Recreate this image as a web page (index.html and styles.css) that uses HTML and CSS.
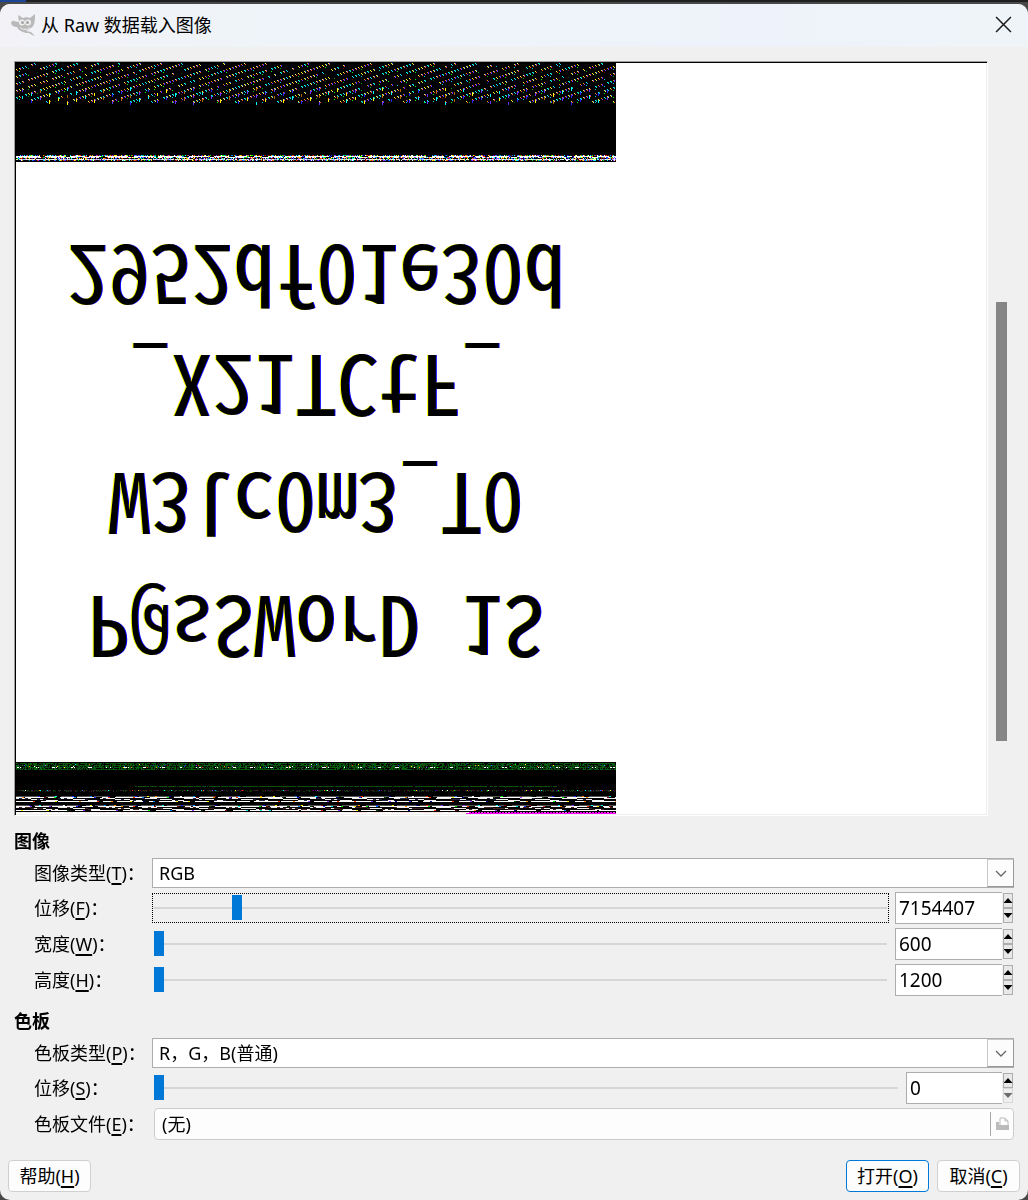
FILE: index.html
```html
<!DOCTYPE html>
<html lang="zh-CN">
<head>
<meta charset="utf-8">
<title>从 Raw 数据载入图像</title>
<link rel="stylesheet" href="styles.css">
</head>
<body>
<main class="dialog">
  <header class="titlebar">
    <svg class="logo" viewBox="0 0 24 22" aria-hidden="true">
      <path d="M1 7C3 6 5 8 8 8L7 1L12 4C14 3 17 3 19 4L24 0C24 6 24 12 20 14L15 17L20 18L24 22L21 21L18 19C13 19 8 17 6 13C3 13 0 11 0 9Z" fill="#b9b9b9"/>
      <circle cx="11" cy="8.500" r="3" fill="#eee"/><circle cx="17" cy="8.500" r="3" fill="#eee"/>
      <circle cx="11.500" cy="8.500" r="1.500" fill="#a5a5a5"/><circle cx="16.500" cy="8.500" r="1.500" fill="#a5a5a5"/>
      <path d="M9 13.500C12 16 16 16 19 13.500" fill="none" stroke="#eee"/>
    </svg>
    <h1 class="title">从 Raw 数据载入图像</h1>
    <button class="close" type="button" aria-label="关闭">
      <svg viewBox="0 0 16 16"><path d="M1 1L15 15M15 1L1 15" fill="none" stroke="#1a1a1a" stroke-width="1.400"/></svg>
    </button>
  </header>

  <section class="preview" aria-label="预览">
    <div class="viewport">
      <div class="artwork">
        <canvas class="strip" id="strip-top" width="600" height="99"></canvas>
        <div class="message">
          <p>P@sSWorD 1S</p>
          <p>W3lc0m3_T0</p>
          <p>_X21TCtF_</p>
          <p>2952df01e30d</p>
        </div>
        <canvas class="strip" id="strip-bottom" width="600" height="52"></canvas>
      </div>
    </div>
    <div class="scrollbar"><div class="scroll-thumb"></div></div>
  </section>

  <form class="form">
    <h2 class="heading">图像</h2>
    <div class="fields">
      <label for="type">图像类型(<u>T</u>)：</label>
      <div class="combo">
        <select id="type"><option>RGB</option></select>
        <span class="combo-arrow"><svg viewBox="0 0 12 7"><path d="M1 1L6 6L11 1" fill="none" stroke="#666" stroke-width="1.300"/></svg></span>
      </div>

      <label for="offset">位移(<u>F</u>)：</label>
      <div class="scale">
        <input class="range focused" type="range" aria-label="位移" min="0" max="66200000" value="7154407">
        <div class="spin spin-wide">
          <input type="text" id="offset" value="7154407">
          <div class="steps"><button type="button" aria-label="增加"><i class="up"></i></button><button type="button" aria-label="减少"><i class="down"></i></button></div>
        </div>
      </div>

      <label for="width">宽度(<u>W</u>)：</label>
      <div class="scale">
        <input class="range" type="range" aria-label="宽度" min="1" max="6000000" value="600">
        <div class="spin spin-wide">
          <input type="text" id="width" value="600">
          <div class="steps"><button type="button" aria-label="增加"><i class="up"></i></button><button type="button" aria-label="减少"><i class="down"></i></button></div>
        </div>
      </div>

      <label for="height">高度(<u>H</u>)：</label>
      <div class="scale">
        <input class="range" type="range" aria-label="高度" min="1" max="6000000" value="1200">
        <div class="spin spin-wide">
          <input type="text" id="height" value="1200">
          <div class="steps"><button type="button" aria-label="增加"><i class="up"></i></button><button type="button" aria-label="减少"><i class="down"></i></button></div>
        </div>
      </div>
    </div>

    <h2 class="heading">色板</h2>
    <div class="fields">
      <label for="palette">色板类型(<u>P</u>)：</label>
      <div class="combo">
        <select id="palette"><option>R，G，B(普通)</option></select>
        <span class="combo-arrow"><svg viewBox="0 0 12 7"><path d="M1 1L6 6L11 1" fill="none" stroke="#666" stroke-width="1.300"/></svg></span>
      </div>

      <label for="palette-offset">位移(<u>S</u>)：</label>
      <div class="scale">
        <input class="range" type="range" aria-label="位移" min="0" max="66200000" value="0">
        <div class="spin">
          <input type="text" id="palette-offset" value="0">
          <div class="steps"><button type="button" aria-label="增加"><i class="up"></i></button><button type="button" aria-label="减少" disabled><i class="down"></i></button></div>
        </div>
      </div>

      <label for="file">色板文件(<u>E</u>)：</label>
      <button class="file" id="file" type="button">
        <span class="file-name">(无)</span>
        <svg class="file-icon" viewBox="0 0 14 14"><path d="M4 8V1H9L12 4V8" fill="#fff" stroke="#bbb"/><path d="M9 1V4H12" fill="none" stroke="#bbb"/><path d="M0 5H3V8H13V13H0Z" fill="#bbb"/></svg>
      </button>
    </div>

    <footer class="actions">
      <button class="btn help" type="button">帮助(<u>H</u>)</button>
      <button class="btn primary" type="button">打开(<u>O</u>)</button>
      <button class="btn" type="button">取消(<u>C</u>)</button>
    </footer>
  </form>
</main>
<script src="strips.js"></script>
</body>
</html>
```
FILE: styles.css
```css
* { box-sizing: border-box; }

body {
  margin: 0;
  padding-top: 4px;
  background: linear-gradient(90deg, #1b4594 26px, #1f1f1f 26px) 0 0 / 100% 2px no-repeat, #484848;
  color: #000;
  font: 18px/24px "Noto Sans", "Noto Sans CJK SC", sans-serif;
}

button, input, select { font: inherit; color: inherit; }
button { cursor: default; }

u {
  text-decoration-thickness: 2px;
  text-underline-offset: 3px;
}

.dialog {
  background: #f0f0f0;
  border-radius: 10px;
  overflow: hidden;
}

.titlebar {
  display: flex;
  align-items: center;
  height: 43px;
  padding: 0 16px 2px 11px;
  background: linear-gradient(90deg, #f2f2f7, #eef4f9 30%, #eef3fb 75%, #eff4f8);
}

.logo { width: 24px; height: 22px; }

.title {
  flex: 1;
  margin: 0 0 0 6px;
  font-size: 18px;
  font-weight: 400;
}

.close {
  display: flex;
  padding: 0;
  border: 0;
  background: none;
}
.close svg { width: 17px; height: 17px; }

.preview {
  display: flex;
  gap: 8px;
  padding: 14px 21px 0 14px;
}

.viewport {
  flex: 1;
  min-width: 0;
  overflow: hidden;
  border: 1px solid #fff;
  border-top-color: #a0a0a0;
  border-left-color: #a0a0a0;
  background: #fff;
  box-shadow: inset 1px 1px #000, inset -1px -1px #eee;
  padding: 1px;
}

.artwork { width: 600px; }
.strip { display: block; }

/* Rows are stored bottom-up, so the picture shows mirrored top to bottom. */
.message {
  display: grid;
  grid-template-rows: 123px 118px 110px 110px;
  height: 600px;
  padding-top: 75px;
  transform: scaleY(-1);
  font: 83px/110px "Noto Sans Mono CJK SC", "DejaVu Sans Mono", monospace;
  text-align: center;
  text-shadow: -1px 0 #ff0, 1px 0 #00f;
}
.message p { margin: 0; }

.scrollbar {
  width: 11px;
  padding: 241px 0 75px;
}
.scroll-thumb {
  height: 100%;
  background: #868686;
}

.form { padding: 0 8px 8px; }

.heading {
  margin: 8px 6px 0;
  font-size: 18px;
  line-height: 34px;
  font-weight: 700;
}

.fields {
  display: grid;
  grid-template-columns: 118px 1fr;
  align-items: center;
  gap: 4px 0;
  padding: 0 6px 0 26px;
}
.fields label { white-space: nowrap; }

.combo {
  display: flex;
  position: relative;
}
.combo select {
  flex: 1;
  height: 30px;
  padding: 0 6px;
  border: 1px solid #adadad;
  border-radius: 0;
  background: #fff;
  appearance: none;
}
.combo-arrow {
  position: absolute;
  top: 1px;
  right: 0;
  display: grid;
  place-items: center;
  width: 27px;
  height: 28px;
  border: 1px solid #c8c8c8;
  border-right-color: #999;
  border-bottom-color: #999;
  background: #fcfcfc;
  pointer-events: none;
}
.combo-arrow svg { width: 12px; height: 7px; }

.scale {
  display: flex;
  align-items: center;
  gap: 6px;
  padding-right: 1px;
}

.range {
  flex: 1;
  min-width: 0;
  height: 30px;
  margin: 0;
  padding: 0 1px;
  border: 1px solid transparent;
  background: none;
  appearance: none;
}
.range.focused { border: 1px dotted #000; }
.range::-webkit-slider-runnable-track {
  height: 2px;
  background: #d6d6d6;
}
.range::-webkit-slider-thumb {
  appearance: none;
  width: 10px;
  height: 25px;
  margin-top: -12px;
  background: #0078d7;
}

.spin {
  display: flex;
  align-items: center;
  gap: 1px;
  width: 107px;
  height: 32px;
}
.spin-wide { width: 118px; }
.spin input {
  flex: 1;
  min-width: 0;
  height: 32px;
  padding: 0 3px;
  border: 1px solid #adadad;
  border-right: 0;
  border-radius: 0;
  background: #fff;
  font-size: 19px;
}
.steps {
  display: grid;
  grid-template-columns: 10px;
}
.steps button {
  display: grid;
  justify-content: center;
  align-content: center;
  height: 15px;
  padding: 0;
  border: 1px solid #adadad;
  background: #e8e8e8;
}
.steps button:disabled { border-color: #d8d8d8; background: #efefef; }
.steps i { width: 9px; height: 5px; background: #000; }
.steps button:disabled i { background: #6d6d6d; }
.steps .up { clip-path: polygon(50% 0, 100% 100%, 0 100%); }
.steps .down { clip-path: polygon(0 0, 100% 0, 50% 100%); }

.file {
  display: flex;
  align-items: center;
  height: 32px;
  margin-left: 2px;
  padding: 0 3px 0 7px;
  border: 1px solid #ccc;
  border-radius: 4px;
  background: #fdfdfd;
  text-align: left;
}
.file-name {
  flex: 1;
  margin-right: 5px;
  border-right: 1px solid #a8a8a8;
}
.file-icon { width: 14px; height: 14px; }

.actions {
  display: flex;
  gap: 8px;
  margin-top: 20px;
}
.btn {
  width: 83px;
  height: 32px;
  padding: 0;
  border: 1px solid #d0d0d0;
  border-radius: 4px;
  background: #fdfdfd;
}
.btn.help { margin-right: auto; }
.btn.primary { border-color: #0078d7; }
```
FILE: strips.js
```js
// Raw bytes read as RGB look like coloured noise above and below the message.
let seed = 7154407;
function rnd() {
  seed = (seed * 1664525 + 1013904223) >>> 0;
  return seed / 4294967296;
}
const bright = ['#ff0', '#0ff', '#22f', '#f30', '#0f0', '#fff', '#93f', '#f80', '#08f', '#800', '#040', '#008'];
const pastel = ['#fff', '#fff', '#fdd', '#bbf', '#fbf', '#ff8', '#8ff', '#88f', '#222'];
const pick = list => list[Math.floor(rnd() * list.length)];

function open(id) {
  const canvas = document.getElementById(id);
  const ctx = canvas.getContext('2d');
  ctx.fillStyle = '#000';
  ctx.fillRect(0, 0, canvas.width, canvas.height);
  return (x, y, color, w = 1, h = 1) => {
    ctx.fillStyle = color;
    ctx.fillRect(x, y, w, h);
  };
}

// Streaks of white broken by dark gaps and coloured pixels.
function streaks(dot, rows, color) {
  for (const y of rows) {
    for (let x = 0; x < 600;) {
      const len = 4 + Math.floor(rnd() * 22);
      dot(x, y, color, len);
      dot(x + len, y, pick(bright), 2);
      x += len + 2 + Math.floor(rnd() * 7);
    }
  }
}

// Short colour clusters that climb in steps, one about every three pixels.
const top_ = open('strip-top');
const clusters = [['#ff0', '#ee6', '#26f'], ['#f80', '#83f', '#22f'], ['#0ff', '#2cf', '#0a6'], ['#ff4', '#f62', '#63f']];
for (let i = 0; i < 200; i++) {
  const x = i * 3;
  const shift = i % 7;
  for (let k = -1; k < 7; k++) {
    const y = k * 7 + 6 - shift;
    const set = pick(clusters);
    if (y < 0 || y > 38) continue;
    if (rnd() < 0.82) {
      top_(x, y, set[0]);
      top_(x + 1, y + 1, set[1]);
      if (rnd() < 0.6) top_(x + 1, y, set[2]);
    }
    if (i % 3 === 1) top_(x, Math.min(y + 3, 39), pick(['#0a2', '#600', '#040', '#0f0', '#006', '#0cc']));
    if (y > 23 && i % 3 === 2) {
      top_(x, y + 1, pick(['#ff0', '#63f', '#0ff', '#a60', '#22f']), 1, 3);
    }
  }
}
for (let x = 0; x < 600; x++) {
  if (rnd() < 0.7) top_(x, 92, pick(bright));
}
streaks(top_, [93, 94, 96], '#fff');
for (let x = 0; x < 600; x++) {
  if (rnd() < 0.4) top_(x, 94, pick(bright));
  if (rnd() < 0.6) top_(x, 95, pick(bright));
  top_(x, 96, pick(pastel));
  if (rnd() < 0.6) top_(x, 97, pick(bright));
}

const low = open('strip-bottom');
for (let y = 1; y < 8; y++) {
  for (let x = 0; x < 600; x++) {
    if (rnd() < (y % 2 ? 0.85 : 0.45)) low(x, y, pick(['#062', '#050', '#151', '#131', '#060']));
    if (y > 1 && y < 6 && rnd() < 0.03) low(x, y, pick(bright));
  }
}
for (let x = 0; x < 600; x++) {
  if (x % 18 < 5 && rnd() < 0.6) low(x, 5, '#fff');
  if (x > 118 && x < 541 && rnd() < 0.9) low(x, 24, '#0a500a');
  if (rnd() < 0.6) low(x, 28, pick(['#040', '#505', '#242', '#300']));
  if (rnd() < 0.1) low(x, 28, pick(bright));
  if (rnd() < 0.3) low(x, 29, '#131');
}
streaks(low, [34, 43], '#555');
streaks(low, [35, 39, 44, 48], '#fff');
for (let x = 0; x < 600; x += 3) {
  const drift = Math.floor(x / 14) % 3;
  low(x, 36 + drift, rnd() < 0.75 ? '#eee' : '#224', 3);
  low(x, 45 + drift, rnd() < 0.6 ? '#eee' : '#422', 3);
  low(x, 50, pick(x > 450 ? ['#f0f', '#e0e', '#f5f'] : ['#fff', '#eee', '#fdd']), x > 450 ? 2 : 3);
}
low(0, 51, '#fff', 450);
low(450, 51, '#f0f', 150);
```
